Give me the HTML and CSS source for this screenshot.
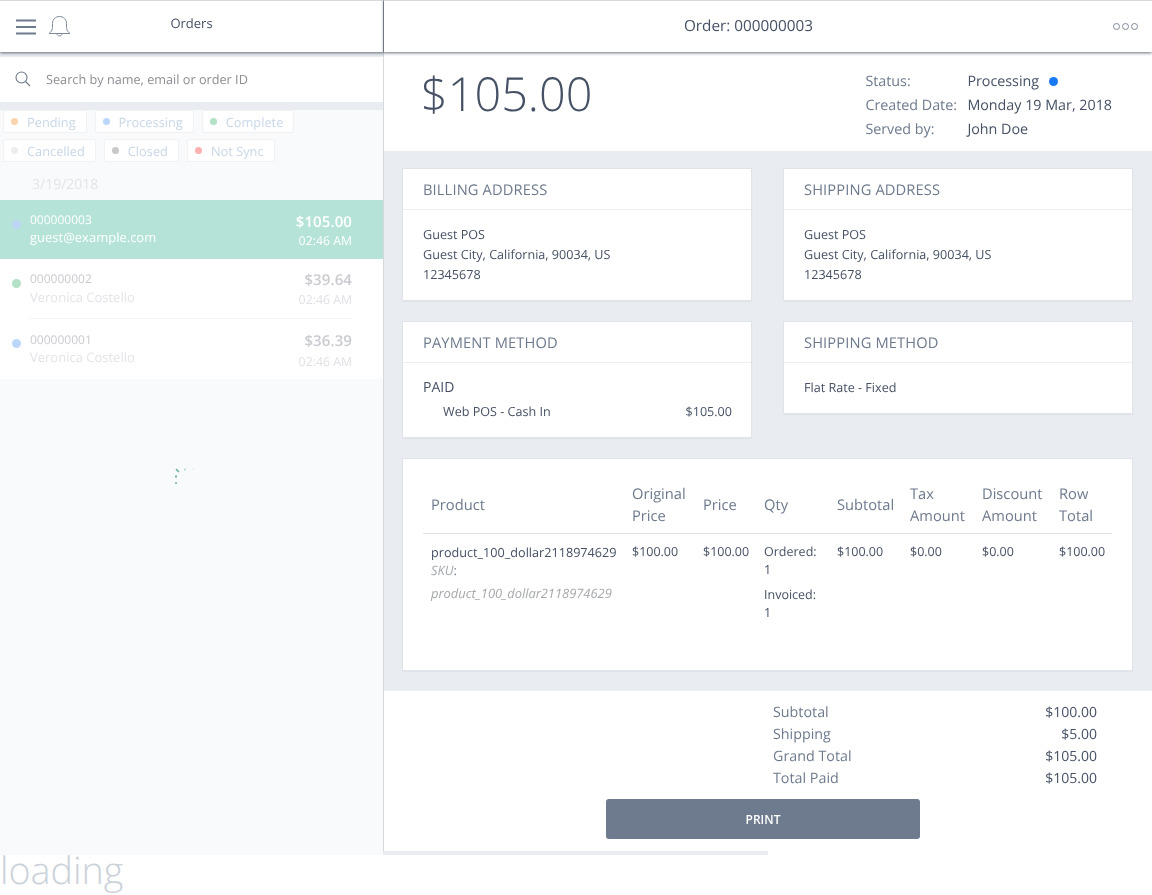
FILE: index.html
```html
<!DOCTYPE html>
<html lang="en">
<head>
    <meta charset="UTF-8">
    <meta name="viewport" content="width=device-width, initial-scale=1.0">
    <title>Orders</title>
    <link rel="stylesheet" href="styles.css">
</head>
<body>
    <div class="app">
        <aside class="sidebar">
            <header class="side-header">
                <svg class="menu-icon" width="20" height="16" viewBox="0 0 20 16">
                    <path d="M0 1.5H20M0 8H20M0 14.5H20" stroke="#6e7b8e" stroke-width="2" fill="none"/>
                </svg>
                <svg class="bell-icon" width="23" height="23" viewBox="0 0 23 23">
                    <path d="M1 18.5c2-1.500 3.500-3 3.500-7.500V8.500C4.500 4.500 7.500 1.500 11.500 1.500s7 3 7 7V11c0 4.500 1.500 6 3.500 7.500ZM9 18.500c0 3.300 5 3.300 5 0" stroke="#7d899a" stroke-width="1" fill="none"/>
                </svg>
                <span class="side-title">Orders</span>
            </header>
            <div class="search-row">
                <svg class="search-icon" width="16" height="16" viewBox="0 0 16 16">
                    <circle cx="6.500" cy="6.500" r="5.500" stroke="#6e7b8e" stroke-width="1.100" fill="none"/>
                    <path d="M10.500 10.500L15 15" stroke="#6e7b8e" stroke-width="1.100"/>
                </svg>
                <div class="search-input">Search by name, email or order ID</div>
            </div>
            <div class="filters">
                <span class="chip"><i class="dot orange"></i>Pending</span>
                <span class="chip"><i class="dot blue"></i>Processing</span>
                <span class="chip"><i class="dot green"></i>Complete</span>
                <span class="chip"><i class="dot light"></i>Cancelled</span>
                <span class="chip"><i class="dot grey"></i>Closed</span>
                <span class="chip"><i class="dot red"></i>Not Sync</span>
            </div>
            <div class="date-label">3/19/2018</div>
            <div class="order-item active">
                <i class="order-dot active-dot"></i>
                <div class="order-left">
                    <div class="order-id">000000003</div>
                    <div class="order-name">guest@example.com</div>
                </div>
                <div class="order-right">
                    <div class="order-total">$105.00</div>
                    <div class="order-time">02:46 AM</div>
                </div>
            </div>
            <div class="order-list">
                <div class="order-item second">
                    <i class="order-dot green"></i>
                    <div class="order-left">
                        <div class="order-id">000000002</div>
                        <div class="order-name">Veronica Costello</div>
                    </div>
                    <div class="order-right">
                        <div class="order-total">$39.64</div>
                        <div class="order-time">02:46 AM</div>
                    </div>
                </div>
                <div class="order-item third">
                    <i class="order-dot blue"></i>
                    <div class="order-left">
                        <div class="order-id">000000001</div>
                        <div class="order-name">Veronica Costello</div>
                    </div>
                    <div class="order-right">
                        <div class="order-total">$36.39</div>
                        <div class="order-time">02:46 AM</div>
                    </div>
                </div>
            </div>
            <div class="spinner-wrap">
                <svg width="20" height="20" viewBox="0 0 20 20">
                    <path d="M1 1L4 4" stroke="#5fb39d" stroke-width="1.500"/>
                    <path d="M1 7.500V9.500" stroke="#3f9f86" stroke-width="1.500"/>
                    <path d="M1 14V16" stroke="#2f8c74" stroke-width="1"/>
                    <path d="M9 1.500H11" stroke="#a8dccc" stroke-width="1.500"/>
                    <path d="M17 1H19" stroke="#d5eee6" stroke-width="1"/>
                </svg>
            </div>
        </aside>
        <main class="detail">
            <header class="detail-header">
                <span class="detail-title">Order: 000000003</span>
                <span class="more"><i></i><i></i><i></i></span>
            </header>
            <section class="summary">
                <div class="grand">$105.00</div>
                <dl class="meta">
                    <dt>Status:</dt><dd>Processing <i class="status-dot"></i></dd>
                    <dt>Created Date:</dt><dd>Monday 19 Mar, 2018</dd>
                    <dt>Served by:</dt><dd>John Doe</dd>
                </dl>
            </section>
            <section class="content">
                <div class="cards">
                    <div class="card">
                        <h3>Billing Address</h3>
                        <div class="card-body">Guest POS<br>Guest City, California, 90034, US<br>12345678</div>
                    </div>
                    <div class="card">
                        <h3>Shipping Address</h3>
                        <div class="card-body">Guest POS<br>Guest City, California, 90034, US<br>12345678</div>
                    </div>
                    <div class="card">
                        <h3>Payment Method</h3>
                        <div class="card-body pay">
                            <div class="paid">PAID</div>
                            <div class="pay-row"><span>Web POS - Cash In</span><span>$105.00</span></div>
                        </div>
                    </div>
                    <div class="card">
                        <h3>Shipping Method</h3>
                        <div class="card-body">Flat Rate - Fixed</div>
                    </div>
                </div>
                <div class="card items">
                    <table>
                        <thead>
                            <tr>
                                <th class="c-product">Product</th>
                                <th class="c-orig">Original Price</th>
                                <th class="c-price">Price</th>
                                <th class="c-qty">Qty</th>
                                <th class="c-sub">Subtotal</th>
                                <th class="c-tax">Tax Amount</th>
                                <th class="c-disc">Discount Amount</th>
                                <th class="c-row">Row Total</th>
                            </tr>
                        </thead>
                        <tbody>
                            <tr>
                                <td>
                                    <div class="product-name">product_100_dollar2118974629</div>
                                    <div class="sku"><em>SKU</em>:</div>
                                    <div class="sku sku-val"><em>product_100_dollar2118974629</em></div>
                                </td>
                                <td>$100.00</td>
                                <td>$100.00</td>
                                <td class="qty-cell">
                                    <div>Ordered: 1</div>
                                    <div class="invoiced">Invoiced: 1</div>
                                </td>
                                <td>$100.00</td>
                                <td>$0.00</td>
                                <td>$0.00</td>
                                <td>$100.00</td>
                            </tr>
                        </tbody>
                    </table>
                </div>
            </section>
            <section class="totals">
                <div class="total-row"><span>Subtotal</span><b>$100.00</b></div>
                <div class="total-row"><span>Shipping</span><b>$5.00</b></div>
                <div class="total-row"><span>Grand Total</span><b>$105.00</b></div>
                <div class="total-row"><span>Total Paid</span><b>$105.00</b></div>
            </section>
            <button class="print">PRINT</button>
        </main>
    </div>
    <div class="strip"><span class="strip-left"></span><span class="strip-right"></span></div>
    <div class="loading">loading</div>
</body>
</html>
```

FILE: styles.css
```css
/* General Styles */
* {
    box-sizing: border-box;
}

html, body {
    height: 100%;
}

body {
    margin: 0;
    font-family: 'Open Sans', sans-serif;
    text-rendering: geometricPrecision;
    background-color: #fff;
    color: #465165;
    overflow: hidden;
}

.app {
    display: flex;
    height: 851px;
    will-change: transform;
}

/* Sidebar */
.sidebar {
    width: 384px;
    flex: none;
    display: flex;
    flex-direction: column;
    background-color: #f9fafc;
    border-right: 1px solid #d5d8dd;
}

.side-header {
    height: 52px;
    flex: none;
    display: flex;
    align-items: center;
    margin-right: -1px;
    padding: 0 16px;
    background-color: #fff;
    border-top: 1px solid #d8d8d8;
    border-right: 1px solid #8f9296;
    box-shadow: 0 1px 3px rgba(40, 50, 70, 0.7);
    position: relative;
}

.menu-icon {
    flex: none;
}

.bell-icon {
    flex: none;
    margin-left: 12px;
}

.side-title {
    flex: 1;
    text-align: center;
    font-size: 13px;
    margin-left: -55px;
    margin-top: -8px;
}

.search-row {
    height: 50px;
    flex: none;
    display: flex;
    align-items: center;
    background-color: #fff;
    border-top: 5px solid #e9ecf0;
    padding: 0 0 2px 15px;
}

.search-icon {
    flex: none;
}

.search-input {
    flex: 1;
    margin-left: 4px;
    padding-left: 11px;
    font-size: 12.700px;
    color: #8c8f94;
}

.filters {
    display: flex;
    flex-wrap: wrap;
    flex: none;
    gap: 6px 8px;
    padding: 0 61px 0 3px;
    background-color: #f9fafc;
    border-top: 8px solid #e9ecf0;
}

.chip {
    display: inline-flex;
    align-items: center;
    height: 23px;
    padding: 0 10px 0 7px;
    background-color: #fff;
    border: 1px solid #f1f2f5;
    border-radius: 2px;
    font-size: 12.800px;
    color: #c8d7e8;
}

.dot {
    width: 7px;
    height: 7px;
    border-radius: 50%;
    margin-right: 9px;
}

.orange { background-color: #fbd3ac; }
.blue { background-color: #bcd7fb; }
.green { background-color: #b4e0c5; }
.light { background-color: #ebedee; }
.grey { background-color: #c8c8c8; }
.red { background-color: #fdb0b0; }

.date-label {
    height: 38px;
    flex: none;
    padding: 13px 0 0 32px;
    font-size: 14px;
    color: #e2e4e8;
}

.order-item {
    display: flex;
    align-items: flex-start;
    position: relative;
    padding-left: 30px;
    padding-right: 31px;
}

.order-item.active {
    height: 59px;
    flex: none;
    padding-top: 11px;
    background-color: #b5e3d7;
    color: #fff;
}

.order-dot {
    position: absolute;
    left: 12px;
    top: 20px;
    width: 9px;
    height: 9px;
    border-radius: 50%;
}

.active-dot {
    background-color: #bdd6f6;
}

.order-left {
    flex: 1;
}

.order-id {
    font-size: 12px;
    line-height: 18px;
    color: #c9cbd0;
}

.order-name {
    font-size: 13px;
    line-height: 18px;
    color: #e2e4e8;
}

.order-right {
    padding-top: 1px;
    text-align: right;
}

.order-total {
    font-size: 15px;
    font-weight: 600;
    line-height: 20px;
    letter-spacing: 0.1px;
    color: #c9cbd0;
}

.order-time {
    font-size: 12.300px;
    line-height: 18px;
    color: #dfe1e5;
}

.active .order-id,
.active .order-name,
.active .order-total,
.active .order-time {
    color: #fff;
}

.active .order-name,
.third .order-name {
    line-height: 17px;
}

.order-list {
    flex: none;
    height: 120px;
    background-color: #fff;
}

.second {
    height: 60px;
    padding-top: 11px;
}

.second::after {
    content: "";
    position: absolute;
    left: 30px;
    right: 30px;
    bottom: 0;
    border-bottom: 1px solid #f4f5f6;
}

.second .order-right {
    margin-top: -1px;
}

.second .order-time {
    margin-top: 1px;
}

.third {
    height: 60px;
    padding-top: 12px;
}

.third .order-right {
    margin-top: -1px;
}

.third .order-time {
    margin-top: 2px;
}

.spinner-wrap {
    padding: 89px 0 0 175px;
    line-height: 0;
}

/* Detail */
.detail {
    flex: 1;
    display: flex;
    flex-direction: column;
    min-width: 0;
}

.detail-header {
    height: 52px;
    flex: none;
    display: flex;
    align-items: center;
    justify-content: center;
    padding-right: 39px;
    position: relative;
    background-color: #fff;
    border-top: 1px solid #d8d8d8;
    box-shadow: 0 1px 3px rgba(40, 50, 70, 0.7);
}

.detail-title {
    font-size: 15.300px;
    margin-top: -2px;
}

.more {
    position: absolute;
    right: 14px;
    top: 22px;
    display: flex;
    gap: 2px;
}

.more i {
    width: 7px;
    height: 7px;
    border: 1px solid #7d899a;
    border-radius: 50%;
}

.summary {
    height: 99px;
    flex: none;
    display: flex;
    justify-content: space-between;
    padding: 0 40px 0 37px;
    background-color: #fff;
}

.grand {
    font-size: 46.800px;
    font-weight: 300;
    line-height: 60px;
    margin-top: 11px;
}

.meta {
    margin: 20px 0 0;
    display: grid;
    grid-template-columns: 102px auto;
    grid-auto-rows: 24px;
    font-size: 14.300px;
    line-height: 20px;
}

.meta dt {
    color: #6e7b8e;
}

.meta dd {
    margin: 0;
}

.status-dot {
    display: inline-block;
    width: 9px;
    height: 9px;
    margin-left: 6px;
    border-radius: 50%;
    background-color: #1979f5;
}

.content {
    flex: none;
    height: 540px;
    padding: 18px 20px 0 19px;
    background-color: #e9ecf1;
}

.cards {
    display: grid;
    grid-template-columns: 348px 348px;
    column-gap: 33px;
    row-gap: 22px;
    align-items: start;
}

.card {
    background-color: #fff;
    box-shadow: 0 0 0 1px #e0e3e8, 0 1px 2px rgba(60, 70, 90, 0.15);
    margin: 0;
}

.card h3 {
    margin: 0;
    height: 41px;
    padding: 11px 20px 0;
    font-size: 14.700px;
    font-weight: 400;
    line-height: 20px;
    letter-spacing: 0.12px;
    text-transform: uppercase;
    color: #6e7b8e;
    border-bottom: 1px solid #eceef1;
}

.card-body {
    padding: 15px 20px 15px;
    font-size: 12.600px;
    line-height: 20px;
}

.pay {
    padding: 14px 19px 15px 20px;
}

.paid {
    font-size: 14px;
    line-height: 22px;
}

.pay-row {
    display: flex;
    justify-content: space-between;
    padding-left: 20px;
    margin-top: 3px;
}

.items {
    margin-top: 22px;
    height: 211px;
    padding: 22px 20px 0;
}

table {
    width: 100%;
    border-collapse: collapse;
    table-layout: fixed;
}

th {
    padding: 0 8px 4px;
    text-align: left;
    font-size: 14.700px;
    font-weight: 400;
    line-height: 22px;
    vertical-align: middle;
    height: 52px;
    color: #6e7b8e;
    border-bottom: 1px solid #dfe2e6;
}

td {
    padding: 9px 8px 0;
    font-size: 12.500px;
    line-height: 18px;
    vertical-align: top;
}

.c-product { width: 201px; }
.c-orig { width: 71px; }
.c-price { width: 61px; }
.c-qty { width: 73px; }
.c-sub { width: 73px; }
.c-tax { width: 72px; }
.c-disc { width: 77px; }

.product-name {
    font-size: 12.650px;
    white-space: nowrap;
}

.sku {
    font-size: 12.900px;
    color: #6e7b8e;
}

.sku em {
    color: #a5a8ad;
}

.sku-val {
    margin-top: 5px;
}

.qty-cell {
    line-height: 18.500px;
}

.invoiced {
    margin-top: 6px;
}

/* Totals */
.totals {
    flex: none;
    padding: 11px 55px 0 389px;
    background-color: #fff;
}

.total-row {
    display: flex;
    justify-content: space-between;
    font-size: 14.300px;
    line-height: 22px;
    color: #6e7b8e;
}

.total-row b {
    font-weight: 400;
    font-size: 14px;
    color: #465165;
}

.print {
    display: block;
    width: 314px;
    height: 40px;
    margin: 9px 0 0 222px;
    border: 0;
    border-radius: 3px;
    background-color: #6e7b8e;
    color: #fff;
    font-family: inherit;
    font-size: 12px;
    font-weight: 600;
}

/* Bottom */
.strip {
    display: flex;
    height: 4px;
    width: 768px;
}

.strip-left {
    width: 383px;
    background-color: #f9fafc;
}

.strip-right {
    flex: 1;
    background-color: #e9ecf1;
}

.loading {
    font-size: 37.700px;
    font-weight: 300;
    line-height: 32px;
    color: #ccd2da;
}
```
